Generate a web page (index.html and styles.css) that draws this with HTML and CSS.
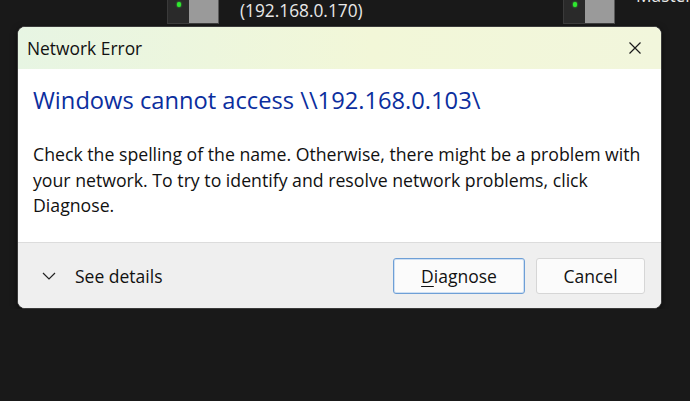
FILE: index.html
```html
<!DOCTYPE html>
<html>
<head>
<meta charset="utf-8">
<link rel="stylesheet" href="styles.css">
</head>
<body>
<div class="desk">
  <div class="device dev1"><span class="led"></span></div>
  <div class="ip">(192.168.0.170)</div>
  <div class="device dev2"><span class="led"></span></div>
  <div class="master">Master</div>
</div>
<div class="dialog">
  <div class="titlebar">
    <span class="title">Network Error</span>
    <svg class="close" width="14" height="14" viewBox="0 0 14 14"><path d="M1.5 1.5 L12.5 12.5 M12.5 1.5 L1.5 12.5" stroke="#1a1a1a" stroke-width="1.2" fill="none"/></svg>
  </div>
  <div class="content">
    <h1 class="heading">Windows cannot access \\192.168.0.103\</h1>
    <p class="body">Check the spelling of the name. Otherwise, there might be a problem with<br>your network. To try to identify and resolve network problems, click<br>Diagnose.</p>
  </div>
  <div class="footer">
    <div class="details">
      <svg class="chev" width="14" height="8" viewBox="0 0 14 8"><path d="M1 1 L7 7 L13 1" stroke="#222" stroke-width="1.2" fill="none"/></svg>
      <span>See details</span>
    </div>
    <div class="buttons">
      <button class="btn primary"><u>D</u>iagnose</button>
      <button class="btn">Cancel</button>
    </div>
  </div>
</div>
</body>
</html>
```
FILE: styles.css
```css
html, body {
  margin: 0;
  padding: 0;
  background: #191919;
  font-family: "Open Sans", "Noto Sans", sans-serif;
}
.desk {
  height: 25px;
  display: flex;
  align-items: flex-start;
  overflow: hidden;
  color: #e8e8e8;
}
.device {
  flex: none;
  width: 52px;
  height: 24px;
  position: relative;
  background: linear-gradient(to right, #2a2a2a 0, #2a2a2a 21px, #9a9a9a 21px, #9a9a9a 100%);
  border-left: 1px solid #3a3a3a;
  border-right: 1px solid #5a5a5a;
  border-bottom: 1px solid #3d3d3d;
  box-sizing: border-box;
}
.dev1 { margin-left: 167px; }
.led {
  position: absolute;
  left: 9px;
  top: 2px;
  width: 4px;
  height: 5px;
  border-radius: 2px;
  background: #2ee82e;
  box-shadow: 0 0 2px #39ff39;
}
.ip {
  flex: none;
  width: 344px;
  padding-left: 21px;
  box-sizing: border-box;
  font-size: 17.3px;
  line-height: 22px;
}
.master {
  margin-left: 21px;
  margin-top: -15px;
  font-size: 17.3px;
  line-height: 22px;
}
.dialog {
  margin: 1px 0 0 17px;
  width: 645px;
  height: 283px;
  box-sizing: border-box;
  border-radius: 8px;
  overflow: hidden;
  background: #fff;
  border: 1px solid #3a3a3a;
  display: flex;
  flex-direction: column;
  box-shadow: 0 2px 6px rgba(0,0,0,0.5);
}
.titlebar {
  height: 42px;
  flex: none;
  display: flex;
  align-items: center;
  justify-content: space-between;
  padding: 0 19px 0 9px;
  background: linear-gradient(to right, #e7f5e3 0%, #f2f7d8 55%, #f2f6dc 100%);
}
.title {
  font-size: 17.4px;
  color: #111;
}
.close { display: block; }
.content {
  flex: 1;
  padding: 16px 10px 0 15px;
}
.heading {
  margin: 0;
  font-weight: 400;
  font-size: 23.7px;
  line-height: 30px;
  color: #0b2e9e;
}
.body {
  margin: 27px 0 0;
  font-size: 17.7px;
  line-height: 25.5px;
  color: #111;
  white-space: nowrap;
}
.footer {
  height: 66px;
  flex: none;
  box-sizing: border-box;
  border-top: 1px solid #dcdcdc;
  background: #efefef;
  display: flex;
  align-items: center;
  justify-content: space-between;
  padding: 0 16px 0 24px;
}
.details {
  display: flex;
  align-items: center;
  gap: 19px;
  font-size: 17.5px;
  color: #111;
}
.chev { display: block; margin-top: 1px; }
.buttons {
  display: flex;
  gap: 11px;
}
.btn {
  height: 36px;
  font-family: inherit;
  font-size: 17.5px;
  color: #111;
  background: #fbfbfb;
  border: 1px solid #d6d6d6;
  border-radius: 3px;
  padding: 0;
}
.btn.primary {
  width: 132px;
  border: 1px solid #6e9fd6;
  box-shadow: inset 0 0 0 1px #cfe0f3;
}
.btn:not(.primary) { width: 109px; }
.btn u { text-decoration-thickness: 1px; text-underline-offset: 3px; }
```
